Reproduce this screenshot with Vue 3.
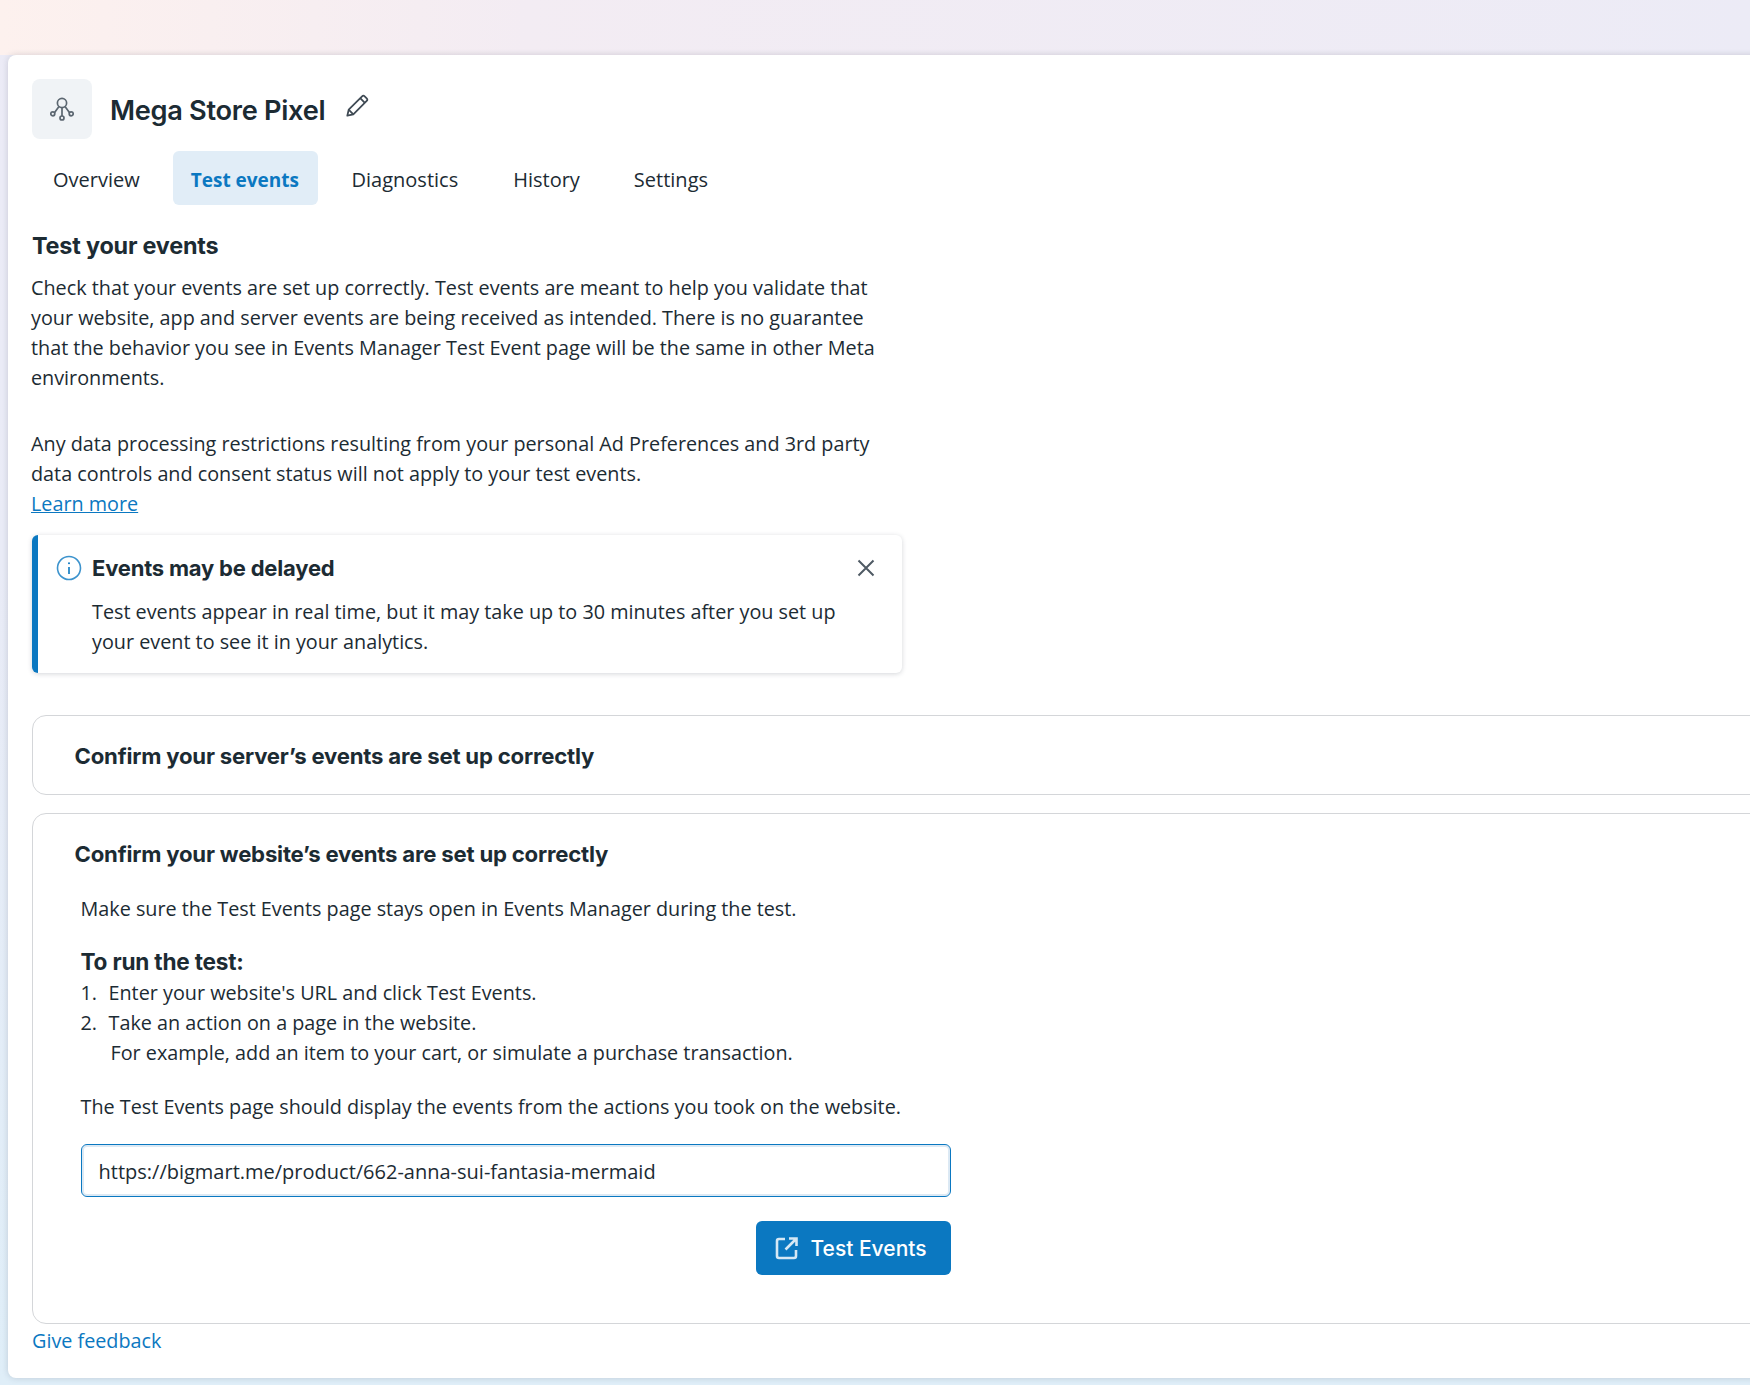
<script setup>
const tabs = [
  { label: 'Overview', active: false },
  { label: 'Test events', active: true },
  { label: 'Diagnostics', active: false },
  { label: 'History', active: false },
  { label: 'Settings', active: false },
]
</script>

<template>
  <div class="page">
    <main class="card">
      <header class="head">
        <div class="logo">
          <svg width="24" height="24" viewBox="0 0 24 24" fill="none" stroke="#5b6670" stroke-width="1.7">
            <circle cx="12" cy="6" r="4.6" />
            <circle cx="2.8" cy="16.8" r="2" />
            <circle cx="12" cy="21" r="2" />
            <circle cx="21.2" cy="16.8" r="2" />
            <path d="M8.8 9.8 4.6 15.6M12 10.6V19M15.2 9.8l4.2 5.8" />
          </svg>
        </div>
        <h1 class="title">Mega Store Pixel</h1>
        <svg class="pencil" width="24" height="24" viewBox="0 0 26 26" fill="none" stroke="#3f4a54" stroke-width="1.9" stroke-linejoin="round">
          <path d="M2.5 23.5 4 17 18.5 2.5a2 2 0 0 1 2.8 0l2.2 2.2a2 2 0 0 1 0 2.8L9 22z" />
          <path d="m16.5 4.5 5 5M4 17l5 5" />
        </svg>
      </header>

      <nav class="tabs">
        <span v-for="t in tabs" :key="t.label" class="tab" :class="{ active: t.active }">{{ t.label }}</span>
      </nav>

      <h2 class="section-title">Test your events</h2>
      <p class="para">Check that your events are set up correctly. Test events are meant to help you validate that your website, app and server events are being received as intended. There is no guarantee that the behavior you see in Events Manager Test Event page will be the same in other Meta environments.</p>
      <p class="para second">Any data processing restrictions resulting from your personal Ad Preferences and 3rd party data controls and consent status will not apply to your test events.<br /><a class="link underline">Learn more</a></p>

      <section class="alert">
        <svg class="info" width="26" height="26" viewBox="0 0 26 26" fill="none" stroke="#0b78c1">
          <circle cx="13" cy="13" r="11.5" stroke-width="1.6" opacity=".8" />
          <path d="M13 12v7" stroke-width="1.6" />
          <circle cx="13" cy="8.3" r="1" fill="#0b78c1" stroke="none" />
        </svg>
        <div class="alert-body">
          <h3 class="alert-title">Events may be delayed</h3>
          <p class="alert-text">Test events appear in real time, but it may take up to 30 minutes after you set up your event to see it in your analytics.</p>
        </div>
        <svg class="close" width="18" height="18" viewBox="0 0 18 18" stroke="#4f5a64" stroke-width="2" fill="none">
          <path d="m1.5 1.5 15 15M16.5 1.5l-15 15" />
        </svg>
      </section>

      <section class="panel server">
        <h3 class="panel-title">Confirm your server’s events are set up correctly</h3>
      </section>

      <section class="panel website">
        <h3 class="panel-title">Confirm your website’s events are set up correctly</h3>
        <div class="panel-content">
          <p class="line">Make sure the Test Events page stays open in Events Manager during the test.</p>
          <h4 class="run">To run the test:</h4>
          <ol class="steps">
            <li><span class="num">1.</span>Enter your website's URL and click Test Events.</li>
            <li><span class="num">2.</span>Take an action on a page in the website.</li>
            <li class="sub">For example, add an item to your cart, or simulate a purchase transaction.</li>
          </ol>
          <p class="line outcome">The Test Events page should display the events from the actions you took on the website.</p>
          <div class="form">
            <div class="input">https://bigmart.me/product/662-anna-sui-fantasia-mermaid</div>
            <button class="btn" type="button">
              <svg width="24" height="24" viewBox="0 0 24 24" fill="none" stroke="#d6e8f5" stroke-width="2.6">
                <path d="M10 3H4a2 2 0 0 0-2 2v15a2 2 0 0 0 2 2h15a2 2 0 0 0 2-2v-6" />
                <path d="M10.5 13.5 21 3M14 2.5h7.5V10" />
              </svg>
              <span class="btn-label">Test Events</span>
            </button>
          </div>
        </div>
      </section>

      <a class="link feedback">Give feedback</a>
    </main>
  </div>
</template>

<style>
html, body { margin: 0; background: #e6eef7; }
</style>

<style scoped>
.page {
  width: 1750px;
  height: 1385px;
  overflow: hidden;
  box-sizing: border-box;
  padding: 55px 0 0 8px;
  background:
    linear-gradient(90deg, #fdf1ee 0%, #f3ecf3 30%, #ecebf6 100%) top / 100% 55px no-repeat,
    linear-gradient(180deg, #ecebf6 0%, #e9ebf6 40%, #dfeef8 100%);
  font-family: "Open Sans", "Noto Sans", sans-serif;
  color: #1c2b33;
  font-size: 19.8px;
  line-height: 30px;
}
.card {
  width: 1900px;
  height: 1323px;
  box-sizing: border-box;
  padding: 24px 24px 0;
  background: #fff;
  border-radius: 8px 0 0 8px;
  box-shadow: 0 0 6px rgba(40, 50, 70, .18);
}
.head { display: flex; align-items: center; height: 60px; }
.logo {
  width: 60px;
  height: 60px;
  border-radius: 8px;
  background: #f0f3f6;
  display: flex;
  align-items: center;
  justify-content: center;
}
.title {
  margin: 4px 0 0 18px;
  font: 600 27.2px/36px Inter, Roboto, sans-serif;
  letter-spacing: -.3px;
  color: #1c2b33;
}
.pencil { margin: -6px 0 0 20px; }
.tabs { display: flex; margin-top: 12px; height: 54px; }
.tab {
  display: flex;
  align-items: center;
  padding: 3px 18px 0;
  border-radius: 6px;
  font-size: 20px;
}
.tab:nth-child(1) { padding: 3px 33px 0 21px; }
.tab:nth-child(3) { padding: 3px 34px 0; }
.tab:nth-child(4) { padding: 3px 21px 0; }
.tab:nth-child(5) { padding: 3px 33px 0; }
.tab.active {
  padding: 3px 18.5px 0 18px;
  background: #e1edf7;
  color: #0b78c1;
  font-weight: 700;
  font-size: 19px;
}
.section-title {
  margin: 26px 0 0;
  font: 700 23.4px/30px Inter, Roboto, sans-serif;
  letter-spacing: -.2px;
}
.para { margin: 12px 0 0 -1px; width: 861px; }
.para.second { margin-top: 36px; }
.link { color: #0b78c1; }
.underline { text-decoration: underline; }
.alert {
  display: flex;
  align-items: flex-start;
  box-sizing: border-box;
  width: 870px;
  height: 138px;
  margin-top: 16px;
  padding: 20px 27px 0 18px;
  background: #fff;
  border-left: 6px solid #0b78c1;
  border-radius: 6px;
  box-shadow: 0 1px 5px rgba(40, 50, 70, .2);
}
.info { flex: none; }
.alert-body { flex: 1; margin-left: 10px; }
.alert-title {
  margin: 0;
  font: 700 22px/26px Inter, Roboto, sans-serif;
  letter-spacing: -.2px;
}
.alert-text { margin: 16px 0 0; width: 760px; }
.close { flex: none; margin-top: 4px; }
.panel {
  box-sizing: border-box;
  border: 1.5px solid #d4d6d9;
  border-radius: 14px;
  padding-left: 41.5px;
}
.server { height: 80px; margin-top: 42px; display: flex; align-items: center; padding-top: 1px; }
.website { height: 511px; margin-top: 18px; padding-top: 25px; }
.panel-title {
  margin: 0;
  font: 700 22.15px/30px Inter, Roboto, sans-serif;
  letter-spacing: -.2px;
}
.panel-content { margin-left: 6px; width: 870px; }
.line { margin: 25px 0 0; white-space: nowrap; }
.run {
  margin: 23px 0 0;
  font: 700 22.6px/30px Inter, Roboto, sans-serif;
  letter-spacing: -.2px;
}
.steps { margin: 1px 0 0; padding: 0; list-style: none; }
.num { display: inline-block; width: 28px; }
.sub { padding-left: 30px; }
.outcome { margin-top: 24px; }
.form { display: flex; flex-direction: column; align-items: flex-end; margin-top: 22px; }
.input {
  box-sizing: border-box;
  width: 870px;
  height: 53px;
  padding: 3px 0 0 17px;
  display: flex;
  align-items: center;
  border: 1.5px solid #0b78c1;
  border-radius: 6px;
  box-shadow: inset 0 0 0 2px #dce9f4;
  font-size: 20px;
}
.btn {
  display: flex;
  align-items: center;
  gap: 12px;
  width: 195px;
  height: 54px;
  margin-top: 24px;
  padding: 0 0 0 19px;
  border: 0;
  border-radius: 6px;
  background: #0b78c1;
  color: #fff;
  font: 500 21px/26px Inter, Roboto, sans-serif;
}
.btn-label { padding-top: 2px; }
.feedback { display: block; margin-top: 2px; }
</style>
